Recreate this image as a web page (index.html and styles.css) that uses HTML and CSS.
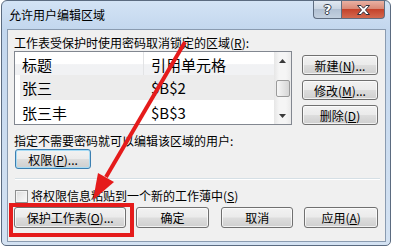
FILE: index.html
```html
<!DOCTYPE html>
<html>
<head>
    <title>允许用户编辑区域</title>
    <link rel="stylesheet" href="styles.css">
</head>
<body>
    <div class="window">
        <div class="titlebar">
            <span class="title">允许用户编辑区域</span>
            <div class="caption-buttons">
                <div class="cap-btn help"><span>?</span></div>
                <div class="cap-btn close">
                    <svg width="13" height="10" viewBox="0 0 13 10">
                        <path d="M0.5,0.5 H4 L6.5,3.2 L9,0.5 H12.5 L8.5,5 L12.5,9.5 H9 L6.5,6.8 L4,9.5 H0.5 L4.5,5 Z" fill="#fff" stroke="#2c3340" stroke-width="1"/>
                    </svg>
                </div>
            </div>
        </div>

        <div class="client">
            <div class="label">工作表受保护时使用密码取消锁定的区域(<u>R</u>):</div>

            <div class="ranges">
                <div class="listbox">
                    <div class="list-body">
                        <div class="list-head">
                            <span class="col1">标题</span>
                            <span class="col2">引用单元格</span>
                        </div>
                        <div class="list-row selected">
                            <span class="col1">张三</span>
                            <span class="col2">$B$2</span>
                        </div>
                        <div class="list-row">
                            <span class="col1">张三丰</span>
                            <span class="col2">$B$3</span>
                        </div>
                    </div>
                    <div class="scrollbar">
                        <div class="sb-arrow">
                            <svg width="7" height="4" viewBox="0 0 7 4"><path d="M3.5,0 L7,4 H0 Z" fill="#3a3a3a"/></svg>
                        </div>
                        <div class="sb-track">
                            <div class="sb-thumb"></div>
                        </div>
                        <div class="sb-arrow">
                            <svg width="7" height="4" viewBox="0 0 7 4"><path d="M0,0 H7 L3.5,4 Z" fill="#3a3a3a"/></svg>
                        </div>
                    </div>
                </div>

                <div class="side-buttons">
                    <button class="btn">新建(<u>N</u>)...</button>
                    <button class="btn">修改(<u>M</u>)...</button>
                    <button class="btn">删除(<u>D</u>)</button>
                </div>
            </div>

            <div class="label label-users">指定不需要密码就可以编辑该区域的用户:</div>
            <button class="btn btn-default btn-perm">权限(<u>P</u>)...</button>

            <div class="separator"></div>

            <label class="check-row">
                <span class="checkbox"></span>
                <span>将权限信息粘贴到一个新的工作薄中(<u>S</u>)</span>
            </label>

            <div class="bottom-buttons">
                <button class="btn btn-protect">保护工作表(<u>O</u>)...</button>
                <button class="btn btn-ok">确定</button>
                <button class="btn btn-cancel">取消</button>
                <button class="btn btn-apply">应用(<u>A</u>)</button>
            </div>
        </div>
    </div>

    <!-- red callout drawn on top of the dialog -->
    <svg class="annotation" width="394" height="246" viewBox="0 0 394 246">
        <rect x="11" y="205" width="121" height="30" fill="none" stroke="#e51b1b" stroke-width="4"/>
        <line x1="185" y1="42" x2="106" y2="177" stroke="#e51b1b" stroke-width="4"/>
        <polygon points="93,200 114,182 98,173" fill="#e51b1b"/>
    </svg>
</body>
</html>
```

FILE: styles.css
```css
body {
    margin: 0;
    background: #fff;
    font-family: "Noto Sans CJK SC", sans-serif;
    font-size: 12px;
    color: #000;
}
.window {
    width: 388px;
    height: 244px;
    margin-left: 1px;
    border: 1px solid #5b6b80;
    border-radius: 6px 6px 5px 5px;
    background: linear-gradient(to bottom, #d3e3f5, #c3d7ee 28px, #d4e2f2);
    display: flex;
    flex-direction: column;
}
.titlebar {
    height: 28px;
    display: flex;
    flex-shrink: 0;
}
.title {
    padding-left: 7px;
    line-height: 27px;
}
.caption-buttons {
    margin-left: auto;
    margin-right: 5px;
    display: flex;
    height: 18px;
}
.cap-btn {
    box-sizing: border-box;
    height: 18px;
    border: 1px solid #5f6d80;
    border-top: none;
    display: flex;
    align-items: center;
    justify-content: center;
}
.help {
    width: 28px;
    border-right: none;
    border-radius: 0 0 0 4px;
    background: linear-gradient(to bottom, #e2e9f2, #cbd6e3 45%, #b2c1d3 50%, #c3d0df);
}
.help span {
    color: #fff;
    font: bold 13px "DejaVu Sans", sans-serif;
    line-height: 16px;
    text-shadow: 1px 0 #333b48, -1px 0 #333b48, 0 1px #333b48, 0 -1px #333b48;
}
.close {
    width: 44px;
    border-radius: 0 0 4px 0;
    background: linear-gradient(to bottom, #e9b1a3, #d98a77 45%, #c5432b 50%, #d3694f);
}
.client {
    flex: 1;
    margin: 0 4px 3px 5px;
    padding: 6px 7px 0 6px;
    border: 1px solid #8a9bb0;
    background: #f0f0f0;
}
.label {
    line-height: 14px;
    white-space: nowrap;
}
.ranges {
    display: flex;
    gap: 10px;
    margin-top: 1px;
}
.listbox {
    box-sizing: border-box;
    width: 278px;
    height: 74px;
    border: 1px solid #828790;
    background: #fff;
    display: flex;
}
.list-body {
    flex: 1;
    font-size: 15px;
}
.list-head {
    display: flex;
    height: 23px;
    line-height: 25px;
    background: linear-gradient(to bottom, #fff, #fff 50%, #f1f2f4 55%, #f1f2f4);
}
.list-head .col1 {
    border-right: 1px solid #e2e3e5;
}
.list-row {
    display: flex;
    height: 25px;
    line-height: 25px;
}
.list-row + .list-row {
    height: 24px;
}
.list-row.selected {
    background: linear-gradient(to right, transparent 5px, #ececec 5px);
}
.col1 {
    box-sizing: border-box;
    width: 129px;
    padding-left: 7px;
}
.col2 {
    padding-left: 7px;
}
.scrollbar {
    width: 17px;
    display: flex;
    flex-direction: column;
    background: linear-gradient(to right, #e6e6e6, #f5f5f5 30%, #f5f5f5 70%, #eaeaea);
}
.sb-arrow {
    height: 17px;
    display: flex;
    align-items: center;
    justify-content: center;
}
.sb-track {
    flex: 1;
    padding: 11px 1px 0 2px;
}
.sb-thumb {
    box-sizing: border-box;
    height: 17px;
    border: 1px solid #9a9a9a;
    border-radius: 2px;
    background: linear-gradient(to right, #f6f6f6, #e6e6e6 50%, #d6d6d6);
}
.side-buttons {
    display: flex;
    flex-direction: column;
    gap: 5px;
    margin-top: 4px;
}
.btn {
    box-sizing: border-box;
    width: 76px;
    height: 20px;
    padding: 0;
    border: 1px solid #707070;
    border-radius: 3px;
    background: linear-gradient(to bottom, #f2f2f2, #ebebeb 48%, #dddddd 52%, #cfcfcf);
    box-shadow: inset 0 0 0 1px rgba(255, 255, 255, 0.7);
    font: 12px "Noto Sans CJK SC", sans-serif;
    line-height: 17px;
    color: #000;
    text-align: center;
}
.label-users {
    margin-top: 9px;
}
.btn-perm {
    display: block;
    margin: 1px 0 0 1px;
    width: 76px;
}
.btn-default {
    border-color: #3c7fb1;
    box-shadow: inset 0 0 0 1px #a8dcf5;
}
.separator {
    margin: 9px -2px 0 1px;
    height: 1px;
    border-bottom: 1px solid #fff;
    background: #d5dfe5;
}
.check-row {
    display: flex;
    align-items: center;
    gap: 3px;
    margin: 9px 0 0 1px;
    line-height: 14px;
}
.checkbox {
    box-sizing: border-box;
    width: 13px;
    height: 13px;
    border: 1px solid #8e8f8f;
    background: linear-gradient(135deg, #dcdcdc, #fbfbfb);
    box-shadow: inset 0 0 0 1px #f4f4f4;
}
.bottom-buttons {
    display: flex;
    margin-top: 4px;
}
.bottom-buttons .btn {
    height: 21px;
    line-height: 18px;
}
.btn-protect {
    width: 113px;
}
.btn-ok {
    width: 73px;
    margin-left: 10px;
}
.btn-cancel {
    width: 73px;
    margin-left: 12px;
}
.btn-apply {
    width: 74px;
    margin-left: 11px;
}
.annotation {
    position: absolute;
    top: 0;
    left: 0;
}
```
